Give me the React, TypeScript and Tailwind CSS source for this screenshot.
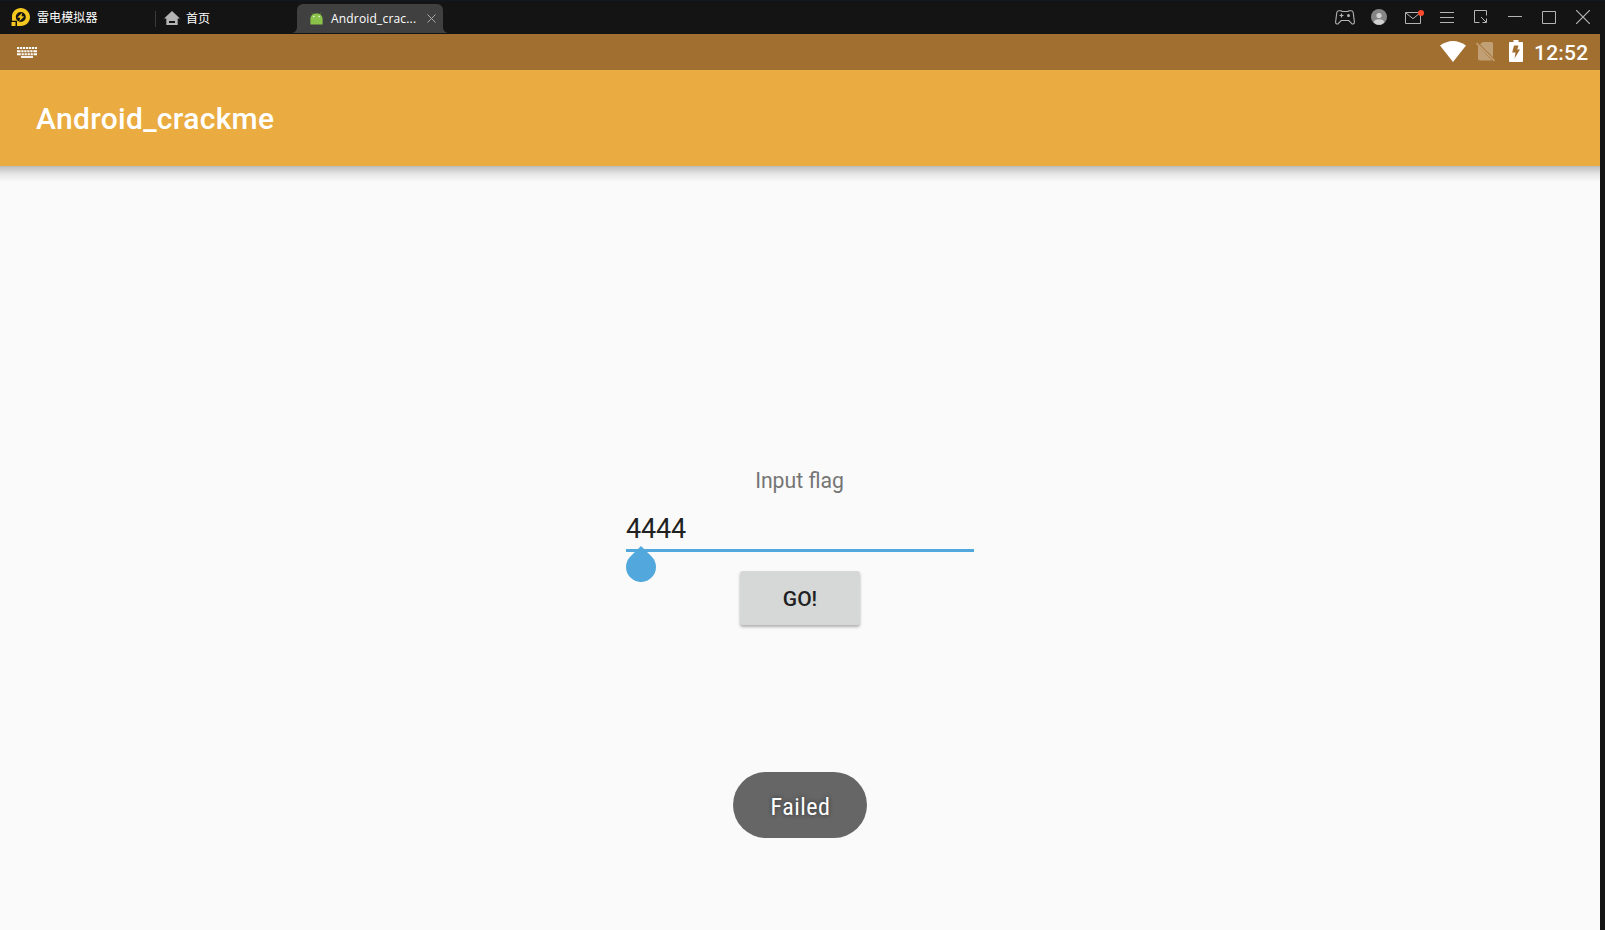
import React from "react";

function LdLogo() {
  return (
    <svg width="19" height="19" viewBox="0 0 19 19" className="shrink-0">
      <path fillRule="evenodd" d="M1 12.700V8.500C1 3.800 5 0 9.800 0S19 4 19 9S15 18 9.800 18H6V12.700ZM9.800 4A5 5 0 1 0 9.800 14A5 5 0 1 0 9.800 4Z" fill="#f5c71f" />
      <rect x="0.500" y="14" width="4" height="4" fill="#f5c71f" />
      <path d="M11.300 4.700 6.300 9.400 9.300 9.800 8.300 13.300 13.300 8.600 10.500 8.200Z" fill="#f5c71f" />
    </svg>
  );
}

function HomeIcon() {
  return (
    <svg width="16" height="14" viewBox="0 0 16 14" className="shrink-0">
      <path d="M8 0 0 7.500H2.300V14H13.700V7.500H16Z" fill="#b4b4b4" />
      <rect x="5" y="10" width="6" height="2" fill="#141414" />
    </svg>
  );
}

function AndroidHead() {
  return (
    <svg width="13" height="13" viewBox="0 0 13 13" className="shrink-0">
      <path d="M1.500 0.300 3.500 3M11.500 0.300 9.500 3" stroke="#5f8a3c" strokeWidth="0.600" />
      <path d="M0.400 12V7C0.400 3.500 3 1.500 6.500 1.500S12.600 3.500 12.600 7V12Q12.600 12.500 12 12.500H1Q0.400 12.500 0.400 12Z" fill="#8bc34a" />
      <circle cx="3.800" cy="4.500" r="0.700" fill="#fff" />
      <circle cx="9.200" cy="4.500" r="0.700" fill="#fff" />
    </svg>
  );
}

function Gamepad() {
  return (
    <svg width="20" height="15" viewBox="0 0 20 15" fill="none" stroke="#b4b4b4">
      <path d="M4 0.700H6.200L7 1.500H13L13.800 0.700H16C17.300 0.700 18 1.500 18.200 2.500L19.400 12C19.500 13.500 18 14.500 16.800 13.700L13.800 10.500H6.200L3.200 13.700C2 14.500 0.500 13.500 0.600 12L1.800 2.500C2 1.500 2.700 0.700 4 0.700Z" strokeWidth="1.100" />
      <path d="M6.500 3.500V7.500M4.500 5.500H8.500" strokeWidth="1.200" />
      <circle cx="13.500" cy="5.500" r="1.500" fill="#b4b4b4" stroke="none" />
    </svg>
  );
}

function Avatar() {
  return (
    <svg width="16" height="16" viewBox="0 0 16 16">
      <circle cx="8" cy="8" r="8" fill="#858585" />
      <circle cx="8" cy="6.500" r="2.600" fill="#d2d2d2" />
      <path d="M2.800 13.500C3 11 5 10.300 8 10.300S13 11 13.200 13.500C11.500 15.300 10 15.800 8 15.800S4.500 15.300 2.800 13.500Z" fill="#d2d2d2" />
    </svg>
  );
}

function Mail() {
  return (
    <svg width="19" height="14" viewBox="0 0 19 14">
      <path d="M0.500 2.500H15.500V13.500H0.500ZM1 3 8 8.700 15 3" fill="none" stroke="#b4b4b4" />
      <circle cx="16" cy="3" r="3" fill="#ff4a2e" />
    </svg>
  );
}

function TitleBar() {
  return (
    <header className="flex h-[34px] w-full shrink-0 items-start border-t border-[#101823] bg-[#141414] font-['Noto_Sans_CJK_SC',sans-serif] text-[12px] text-white">
      <div className="flex h-[32px] w-[155px] items-center pl-[11px]">
        <LdLogo />
        <span className="ml-[7px] leading-4 tracking-[0.1px]">雷电模拟器</span>
      </div>
      <div className="mt-[10px] h-4 w-px bg-[#3c3c3c]" />
      <div className="flex h-[33px] w-[132px] items-center pl-[8px]">
        <HomeIcon />
        <span className="ml-[6px] leading-4">首页</span>
      </div>
      <div className="mt-[3px] flex h-[29px] items-start">
        <svg width="9" height="29" viewBox="0 0 9 29">
          <path d="M9 0V29H4Q9 28 9 23Z" fill="#404040" />
        </svg>
        <div className="flex h-[29px] w-[146px] items-center rounded-t-[6px] bg-[#404040] pl-[13px]">
          <AndroidHead />
          <span className="ml-[8px] w-[90px] whitespace-nowrap font-['Open_Sans',sans-serif] text-[12px] leading-4 tracking-[0.180px]">Android_crac...</span>
          <svg width="9" height="9" viewBox="0 0 9 9" className="mb-px ml-[6px]">
            <path d="M0.500 0.500 8.500 8.500M8.500 0.500 0.500 8.500" stroke="#aaa" />
          </svg>
        </div>
        <svg width="5" height="29" viewBox="0 0 5 29">
          <path d="M0 23Q0 28 5 29H0Z" fill="#404040" />
        </svg>
      </div>
      <div className="ml-auto flex h-[32px] items-center pr-[15px]">
        <Gamepad />
        <div className="ml-[16px]"><Avatar /></div>
        <div className="ml-[18px]"><Mail /></div>
        <svg width="14" height="11" viewBox="0 0 14 11" className="ml-[16px]">
          <path d="M0 0.500H14M0 5.500H14M0 10.500H14" stroke="#b4b4b4" />
        </svg>
        <svg width="14" height="14" viewBox="0 0 14 14" fill="none" stroke="#b4b4b4" className="ml-[20px]">
          <path d="M5.500 12.500H0.500V0.500H12.500V5.500M7 7 12.500 12.500M12.500 8.500V12.500H8.500" />
        </svg>
        <svg width="14" height="1" viewBox="0 0 14 1" className="mb-[2px] ml-[20px]">
          <path d="M0 0.500H14" stroke="#b4b4b4" />
        </svg>
        <svg width="14" height="13" viewBox="0 0 14 13" className="ml-[20px]">
          <path d="M0.500 0.500H13.500V12.500H0.500Z" fill="none" stroke="#b4b4b4" />
        </svg>
        <svg width="14" height="14" viewBox="0 0 14 14" className="ml-[20px]">
          <path d="M0 0 14 14M14 0 0 14" stroke="#b4b4b4" strokeWidth="1.200" />
        </svg>
      </div>
    </header>
  );
}

function StatusBar() {
  return (
    <div className="flex h-9 w-full items-center bg-[#a16f30] pl-[17px] pr-[12px] text-white">
      <svg width="20" height="11" viewBox="0 0 20 11" fill="none" stroke="#fff">
        <path d="M0 1H20" strokeWidth="2" strokeDasharray="2.200 0.760" />
        <path d="M0 4.200H20" strokeWidth="1.900" strokeDasharray="3.500 0.800 2.200 0.800 2.200 0.800 2.200 0.800 2.200 0.800 4" />
        <path d="M0 7.200H20" strokeWidth="1.900" strokeDasharray="3.800 0.800 2.200 0.800 2.200 0.800 2.200 0.800 2.200 0.800 4" />
        <path d="M4 10H16" strokeWidth="1.800" />
      </svg>
      <svg width="26" height="21" viewBox="0 0 26 21" className="mb-[2px] ml-auto">
        <path d="M0 4.500Q13-4.500 26 4.500L13 21Z" fill="#fff" />
      </svg>
      <svg width="19" height="20" viewBox="0 0 19 20" className="ml-[10px]">
        <path d="M6.500 0H15.500Q17 0 17 1.500V16.500L16 17.500 2 4.500ZM2 4.500 16 18.500H4Q2 18.500 2 16.500Z" fill="#c2a075" />
        <path d="M2.500 1.600 19 18.100" stroke="#a16f30" strokeWidth="1.200" />
        <path d="M0.500 1 18.500 19" stroke="#c2a075" strokeWidth="1.600" />
      </svg>
      <svg width="14" height="22" viewBox="0 0 14 22" className="mb-[2px] ml-[14px]">
        <path d="M4.500 0H9.500V2H13Q14 2 14 3V21Q14 22 13 22H1Q0 22 0 21V3Q0 2 1 2H4.500Z" fill="#fff" />
        <path d="M5 5.500H9.500L8.300 9.500H11L5.500 18.500 6.500 12.500H3.200Z" fill="#a16f30" />
      </svg>
      <span className="ml-[11px] w-[54px] pt-px font-[Roboto,sans-serif] text-[21px] font-medium leading-6 tracking-[0.200px]">12:52</span>
    </div>
  );
}

export default function App() {
  return (
    <div className="flex h-[930px] w-[1605px] flex-col overflow-hidden bg-[#141414] font-[Roboto,sans-serif]">
      <TitleBar />
      <div className="flex h-[896px] w-[1600px] flex-col bg-[#fafafa]">
        <StatusBar />
        <div className="flex h-24 shrink-0 items-center bg-[#eaab40] pl-9 pt-[2px]">
          <h1 className="text-[30px] font-medium leading-9 tracking-[0.300px] text-white">Android_crackme</h1>
        </div>
        <div className="h-4 shrink-0 bg-linear-to-b from-[#bdbdbd] via-[#e6e6e6] to-[#fafafa]" />
        <main className="flex grow flex-col items-center">
          <label className="mt-[286px] pr-px text-[21.200px] leading-[26px] text-[#757575]">Input flag</label>
          <div className="relative mt-[19px] h-[39px] w-[348px] border-b-3 border-[#52a8dc] text-[27px] leading-[33px] tracking-[-0.150px] text-[#212121]">
            4444
            <svg width="30" height="36" viewBox="0 0 30 36" className="absolute left-0 top-[33px]">
              <path d="M15 0 25.600 10.400A15 15 0 1 1 4.400 10.400Z" fill="#52a8dc" />
            </svg>
          </div>
          <button className="mt-[19px] h-[54px] w-[120px] rounded-[3px] bg-[#d6d8d7] pt-[2px] text-[21px] font-medium leading-6 text-[#212121] shadow-[0_2px_3px_rgba(0,0,0,0.3)]">GO!</button>
          <div className="mt-[147px] flex h-[66px] w-[134px] items-center justify-center rounded-full bg-[#666666] pl-px pt-[4px] font-['Roboto_Condensed',Roboto,sans-serif] text-[24px] font-normal leading-7 tracking-[0.5px] text-white [text-shadow:0_0_4px_#333]">Failed</div>
        </main>
      </div>
    </div>
  );
}
